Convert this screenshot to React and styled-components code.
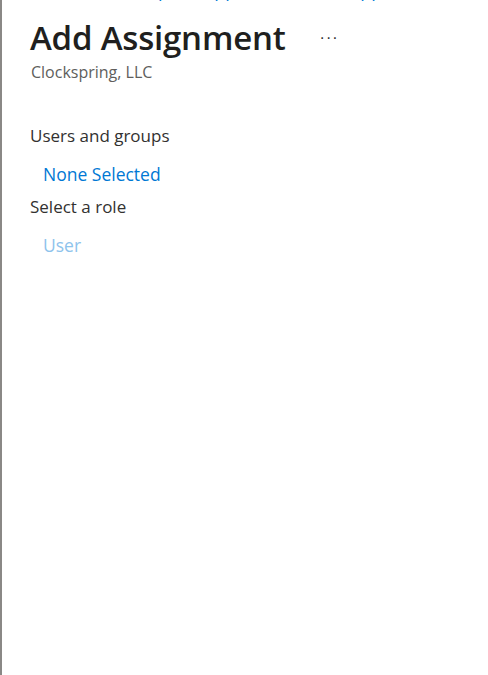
import React from 'react';
import styled, { createGlobalStyle } from 'styled-components';

const GlobalStyle = createGlobalStyle`
  html, body {
    margin: 0;
    padding: 0;
    background: #ffffff;
  }
  body {
    font-family: "Open Sans", "Noto Sans", sans-serif;
    color: #323130;
  }
`;

const Blade = styled.div`
  width: 488px;
  height: 675px;
  box-sizing: border-box;
  overflow: hidden;
  border-left: 2px solid #8a8886;
  position: relative;
  background: #fff;
`;

const TopEdge = styled.div`
  position: absolute;
  left: -2px;
  top: 0;
  width: 2px;
  height: 31px;
  background: #252423;
`;

// previous blade's breadcrumb, scrolled so only the descenders peek in
const Breadcrumb = styled.nav`
  margin-top: -22px;
  padding-left: 111px;
  height: 24px;
  font-size: 18px;
  line-height: 24px;
  color: #0078d4;
  white-space: nowrap;
`;

const Header = styled.div`
  display: flex;
  align-items: center;
  padding: 15px 0 0 28px;
  height: 40px;
`;

const Title = styled.h1`
  margin: 0;
  font-size: 33px;
  font-weight: 600;
  color: #201f1e;
  letter-spacing: -0.2px;
`;

const More = styled.button`
  border: 0;
  background: none;
  margin: 2px 0 0 34px;
  padding: 0;
  font-size: 16px;
  color: #323130;
  letter-spacing: 1px;
  line-height: 1;
`;

const Subtitle = styled.div`
  padding-left: 29px;
  margin-top: 4px;
  font-size: 16px;
  color: #605e5c;
`;

const Body = styled.div`
  padding: 42px 0 0 28px;
`;

const Label = styled.div`
  font-size: 17px;
  line-height: 22px;
  color: #323130;
  margin-bottom: ${p => p.gap || 0}px;
`;

const Value = styled.a`
  display: block;
  padding-left: 13px;
  font-size: 17.5px;
  line-height: 22px;
  color: ${p => (p.muted ? '#8ec3ec' : '#0078d4')};
  text-decoration: none;
  margin-bottom: ${p => p.gap || 0}px;
`;

export default function App() {
  return (
    <>
      <GlobalStyle />
      <Blade>
        <TopEdge />
        <Breadcrumb>Enterprise applications &gt; All applications</Breadcrumb>
        <Header>
          <Title>Add Assignment</Title>
          <More aria-label="More actions">···</More>
        </Header>
        <Subtitle>Clockspring, LLC</Subtitle>
        <Body>
          <Label gap={16}>Users and groups</Label>
          <Value gap={11}>None Selected</Value>
          <Label gap={16}>Select a role</Label>
          <Value muted>User</Value>
        </Body>
      </Blade>
    </>
  );
}
